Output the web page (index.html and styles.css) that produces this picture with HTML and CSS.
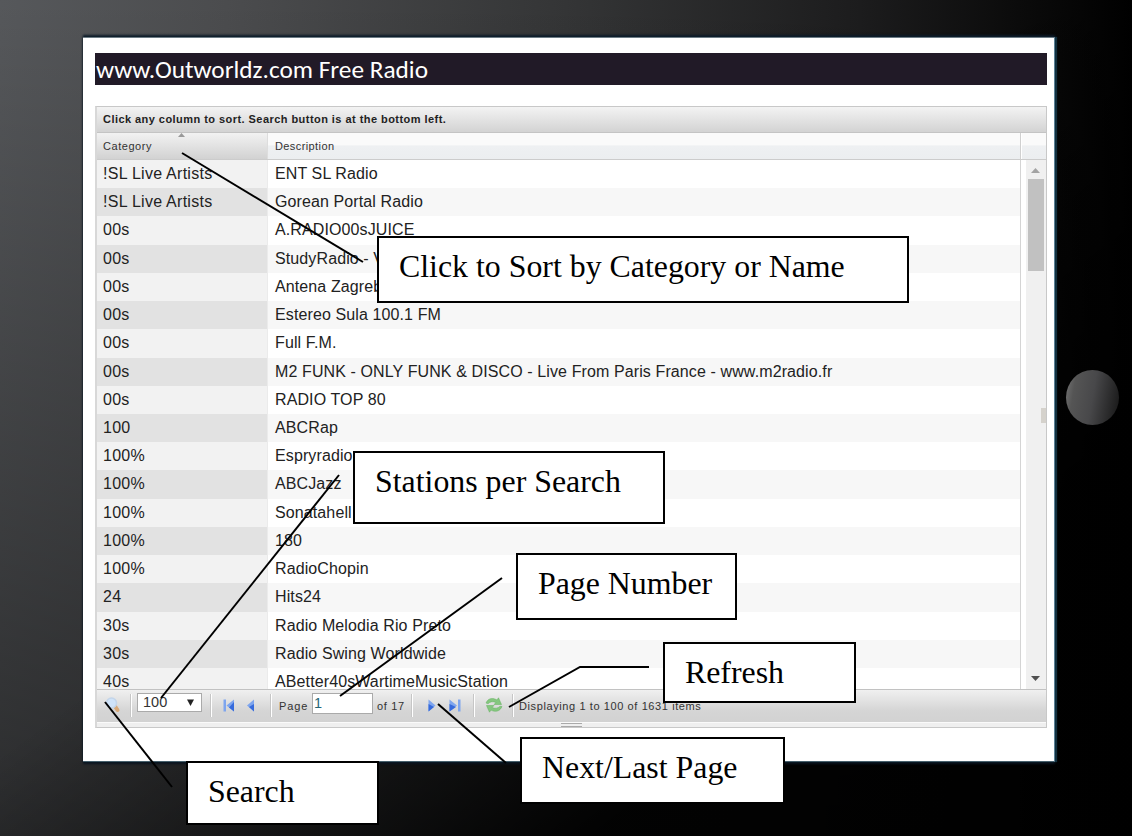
FILE: index.html
```html
<!DOCTYPE html>
<html lang="en">
<head>
<meta charset="utf-8">
<title>www.Outworldz.com Free Radio</title>
<link rel="stylesheet" href="styles.css">
</head>
<body>
<div class="tablet">
  <main class="screen">
    <h1 class="banner"><span>www.Outworldz.com Free Radio</span></h1>
    <section class="grid">
      <div class="grid-title"><span>Click any column to sort. Search button is at the bottom left.</span></div>
      <div class="grid-head">
        <div class="head-cat"><span>Category</span><svg class="sort" width="7" height="4" viewBox="0 0 7 4"><path d="M0 4L3.500 0L7 4Z" fill="#999"/></svg></div>
        <div class="head-desc"><span>Description</span></div>
        <div class="head-end"></div>
      </div>
      <div class="grid-body">
        <div class="rows">
          <div class="row"><div class="cat">!SL Live Artists</div><div class="desc">ENT SL Radio</div></div>
          <div class="row"><div class="cat">!SL Live Artists</div><div class="desc">Gorean Portal Radio</div></div>
          <div class="row"><div class="cat">00s</div><div class="desc">A.RADIO00sJUICE</div></div>
          <div class="row"><div class="cat">00s</div><div class="desc">StudyRadio - V</div></div>
          <div class="row"><div class="cat">00s</div><div class="desc">Antena Zagreb</div></div>
          <div class="row"><div class="cat">00s</div><div class="desc">Estereo Sula 100.1 FM</div></div>
          <div class="row"><div class="cat">00s</div><div class="desc">Full F.M.</div></div>
          <div class="row"><div class="cat">00s</div><div class="desc">M2 FUNK - ONLY FUNK &amp; DISCO - Live From Paris France - www.m2radio.fr</div></div>
          <div class="row"><div class="cat">00s</div><div class="desc">RADIO TOP 80</div></div>
          <div class="row"><div class="cat">100</div><div class="desc">ABCRap</div></div>
          <div class="row"><div class="cat">100%</div><div class="desc">Espryradio</div></div>
          <div class="row"><div class="cat">100%</div><div class="desc">ABCJazz</div></div>
          <div class="row"><div class="cat">100%</div><div class="desc">Sonatahell</div></div>
          <div class="row"><div class="cat">100%</div><div class="desc">180</div></div>
          <div class="row"><div class="cat">100%</div><div class="desc">RadioChopin</div></div>
          <div class="row"><div class="cat">24</div><div class="desc">Hits24</div></div>
          <div class="row"><div class="cat">30s</div><div class="desc">Radio Melodia Rio Preto</div></div>
          <div class="row"><div class="cat">30s</div><div class="desc">Radio Swing Worldwide</div></div>
          <div class="row row-last"><div class="cat">40s</div><div class="desc">ABetter40sWartimeMusicStation</div></div>
        </div>
        <div class="scrollbar">
          <svg width="9" height="5" viewBox="0 0 9 5"><path d="M0 5L4.500 0L9 5Z" fill="#a3a3a3"/></svg>
          <div class="thumb"></div>
          <div class="spacer"></div>
          <svg width="9" height="5" viewBox="0 0 9 5"><path d="M0 0L4.500 5L9 0Z" fill="#505050"/></svg>
        </div>
      </div>
      <div class="pager">
        <svg class="search-icon" width="16" height="18" viewBox="0 0 16 18"><path d="M10.500 11L12.500 14" stroke="#d9a978" stroke-width="4" stroke-linecap="round"/><circle cx="6.500" cy="7" r="5" fill="#cfe3f9" stroke="#c3d5ea" stroke-width="1.500"/></svg>
        <i class="sep"></i>
        <div class="select"><span>100</span><svg width="7" height="7" viewBox="0 0 7 7"><path d="M0 0.500H7L3.500 7Z" fill="#222"/></svg></div>
        <i class="sep"></i>
        <svg class="first" width="12" height="13" viewBox="0 0 12 13"><path d="M0.500 0.500H3V12.500H0.500ZM11 0.500V12.500L3.500 6.500Z" fill="#7ea5ee"/><path d="M11 3V12.500L6 8.500Z" fill="#376bdc"/></svg>
        <svg class="prev" width="8" height="13" viewBox="0 0 8 13"><path d="M7 0.500V12.500L0 6.500Z" fill="#7ea5ee"/><path d="M7 5V12.500L2 8Z" fill="#376bdc"/></svg>
        <i class="sep"></i>
        <span class="page-label">Page</span>
        <div class="page-input">1</div>
        <span class="page-total">of 17</span>
        <i class="sep"></i>
        <svg class="next" width="8" height="13" viewBox="0 0 8 13"><path d="M0.500 0.500V12.500L7.500 6.500Z" fill="#7ea5ee"/><path d="M0.500 5V12.500L6 8Z" fill="#376bdc"/></svg>
        <svg class="last" width="12" height="13" viewBox="0 0 12 13"><path d="M9 0.500H11.500V12.500H9ZM0.500 0.500V12.500L8 6.500Z" fill="#7ea5ee"/><path d="M0.500 5V12.500L7 8Z" fill="#376bdc"/></svg>
        <i class="sep"></i>
        <svg class="refresh" width="18" height="16" viewBox="0 0 18 16"><g fill="#85c77f" stroke="#62b05f" stroke-width=".5"><path d="M1 6C3 1 8 0.500 12 3L13.500 0.800L16.500 7.500L9 7.500L11 5.500C8 4.200 5 4.500 3 6.800Z"/><path d="M17 9.500C15 14.500 10 15.500 6 13L4.500 15.200L1.500 8.500L9 8.500L7 10.500C10 11.800 13 11.500 15 9.200Z"/></g></svg>
        <i class="sep"></i>
        <span class="status">Displaying 1 to 100 of 1631 items</span>
      </div>
      <div class="resizer"><i></i></div>
      <b class="side-grip"></b>
    </section>
  </main>
  <div class="home"></div>
  <svg class="leaders" width="1132" height="836" viewBox="0 0 1132 836">
    <g fill="none" stroke="#000" stroke-width="2">
      <path d="M182 153L363 262"/>
      <path d="M339 475L161 698"/>
      <path d="M502 578L340 696"/>
      <path d="M649 667H580L509 707"/>
      <path d="M438 704L506 763"/>
      <path d="M105 702L172 787"/>
    </g>
  </svg>
  <div class="note note-sort"><span>Click to Sort by Category or Name</span></div>
  <div class="note note-count"><span>Stations per Search</span></div>
  <div class="note note-page"><span>Page Number</span></div>
  <div class="note note-refresh"><span>Refresh</span></div>
  <div class="note note-next"><span>Next/Last Page</span></div>
  <div class="note note-search"><span>Search</span></div>
</div>
</body>
</html>
```
FILE: styles.css
```css
* { box-sizing: border-box; }
body { margin: 0; font-family: "Liberation Sans", Arial, sans-serif; }
.tablet {
  position: relative; width: 1132px; height: 836px; overflow: hidden;
  padding: 37px 0 0 83px;
  background:
    linear-gradient(to bottom right, rgba(0,0,0,0) 45%, rgba(0,0,0,.2) 53%, rgba(0,0,0,.6) 67%, rgba(0,0,0,.9) 76%),
    linear-gradient(180deg, rgba(0,0,0,0) 0, rgba(0,0,0,.5) 100%),
    linear-gradient(90deg, #56585b 0, #4b4c4e 20%, #343536 50%, #1c1c1d 76%, #0b0b0b 90%, #000 100%);
}
.screen {
  width: 972px; height: 725px; padding: 15px 8px 0 12px; background: #fff;
  border-top: 1px solid #6d7b84; border-right: 1px solid #5c8296;
  border-bottom: 1px solid #47606c;
  box-shadow: 2px 0 1px #12303f, 0 -2px 2px #0c1a28, 0 2px 2px #0a1420;
}
.banner {
  margin: 0; height: 32px; width: 952px; padding-left: 1px; background: #211a27; color: #fff;
  font: 400 25.300px/34px Carlito, Calibri, "Noto Sans", sans-serif; white-space: nowrap;
}
.grid {
  position: relative; width: 952px; height: 622px; margin-top: 21px; display: flex; flex-direction: column;
  border: 1px solid #c8c8c8; border-left-width: 2px; border-left-color: #d8d8d8; background: #fff;
}
.grid-title {
  flex: none; height: 26px; padding-left: 6px; background: linear-gradient(#f3f3f3, #d3d3d3);
  border-bottom: 1px solid #c4c4c4; font: bold 11px/24px "Liberation Sans", sans-serif; letter-spacing: .45px; color: #222;
}
.grid-head { flex: none; height: 27px; display: flex; border-bottom: 1px solid #ccc; font-size: 11px; line-height: 26px; color: #333; }
.head-cat { width: 171px; padding-left: 6px; background: linear-gradient(#f2f2f2, #d2d2d2); border-right: 1px solid #ddd; position: relative; letter-spacing: .55px; }
.sort { position: absolute; left: 81px; top: 0; }
.head-desc { width: 753px; padding-left: 7px; background: linear-gradient(#fafafa 0 45%, #eef0f2 50%, #eceef0); border-right: 1px solid #d0d0d0; letter-spacing: .4px; }
.head-end { flex: 1; margin-left: 1px; background: linear-gradient(#fafafa 0 45%, #eef0f2 50%, #eceef0); }
.grid-body { flex: none; height: 529px; display: flex; overflow: hidden; }
.rows { width: 924px; border-right: 1px solid #d4d4d4; }
.row { height: 28.230px; display: flex; font-size: 16px; line-height: 28px; letter-spacing: .11px; color: #222; white-space: nowrap; }
.row-last { height: 20.860px; }
.cat { width: 171px; padding-left: 6px; background: #f2f2f2; border-right: 1px solid #ebebeb; letter-spacing: .26px; }
.desc { flex: 1; padding-left: 7px; }
.row:nth-child(even) .cat { background: #e2e2e2; }
.row:nth-child(even) .desc { background: #f7f7f7; }
.scrollbar { width: 20px; margin-left: 5px; background: #f0f0f0; display: flex; flex-direction: column; align-items: center; padding: 8px 1px 8px 0; }
.thumb { width: 16px; height: 92px; margin-top: 6px; background: #c1c1c1; }
.spacer { flex: 1; }
.pager {
  flex: none; height: 33px; display: flex; align-items: flex-start; border-top: 1px solid #c2c2c2; font-size: 11px; line-height: 14px; color: #333;
  background: linear-gradient(#f0f0f0, #d5d5d5 65%, #d2d2d2); white-space: nowrap;
}
.sep { flex: none; width: 2px; height: 23px; margin-top: 4px; background: linear-gradient(90deg, #c6c6c6 50%, #fff 50%); }
.pager svg { flex: none; }
.search-icon { margin: 6px 9px 0 8px; }
.select { width: 65px; height: 19px; margin: 3px 8px 0 5px; border: 1px solid #aaa; background: #fff; display: flex; align-items: center; justify-content: space-between; padding: 0 7px 0 5px; font-size: 14.500px; line-height: 17px; }
.first { margin: 9px 0 0 11px; }
.prev { margin: 9px 15px 0 12px; }
.page-label { margin: 9px 0 0 7px; width: 33px; letter-spacing: .9px; }
.page-input { width: 61px; height: 21px; margin-top: 3px; border: 1px solid #aaa; background: #fff; padding-left: 1px; font-size: 14.500px; line-height: 19px; color: #256576; }
.page-total { margin: 9px 0 0 4px; width: 34px; letter-spacing: .65px; }
.next { margin: 9px 0 0 15px; }
.last { margin: 9px 12px 0 13px; }
.refresh { margin: 7px 9px 0 10px; }
.status { margin: 9px 0 0 5px; letter-spacing: .6px; }
.resizer { flex: none; height: 5px; background: #efefef; border-top: 1px solid #fafafa; display: flex; justify-content: center; }
.resizer i { width: 21px; height: 4px; border: solid #aaa; border-width: 1px 0; }
.side-grip { position: absolute; right: 0; top: 301px; width: 5px; height: 15px; background: #d5d2cc; }
.home {
  position: absolute; left: 1066px; top: 370px; width: 53px; height: 55px; border-radius: 50%;
  background: linear-gradient(100deg, #777 0, #555 18%, #48484a 50%, #151515 100%);
}
.leaders { position: absolute; left: 0; top: 0; }
.note {
  position: absolute; background: #fff; border: 2px solid #000; padding: 10px 0 0 20px;
  font: 31.850px/37px "Liberation Serif", "Times New Roman", serif; color: #000; white-space: nowrap;
}
.note-sort { left: 377px; top: 236px; width: 532px; height: 67px; }
.note-count { left: 353px; top: 451px; width: 312px; height: 73px; }
.note-page { left: 516px; top: 553px; width: 221px; height: 67px; }
.note-refresh { left: 663px; top: 642px; width: 193px; height: 61px; }
.note-next { left: 520px; top: 737px; width: 265px; height: 67px; }
.note-search { left: 186px; top: 761px; width: 193px; height: 64px; }
```
